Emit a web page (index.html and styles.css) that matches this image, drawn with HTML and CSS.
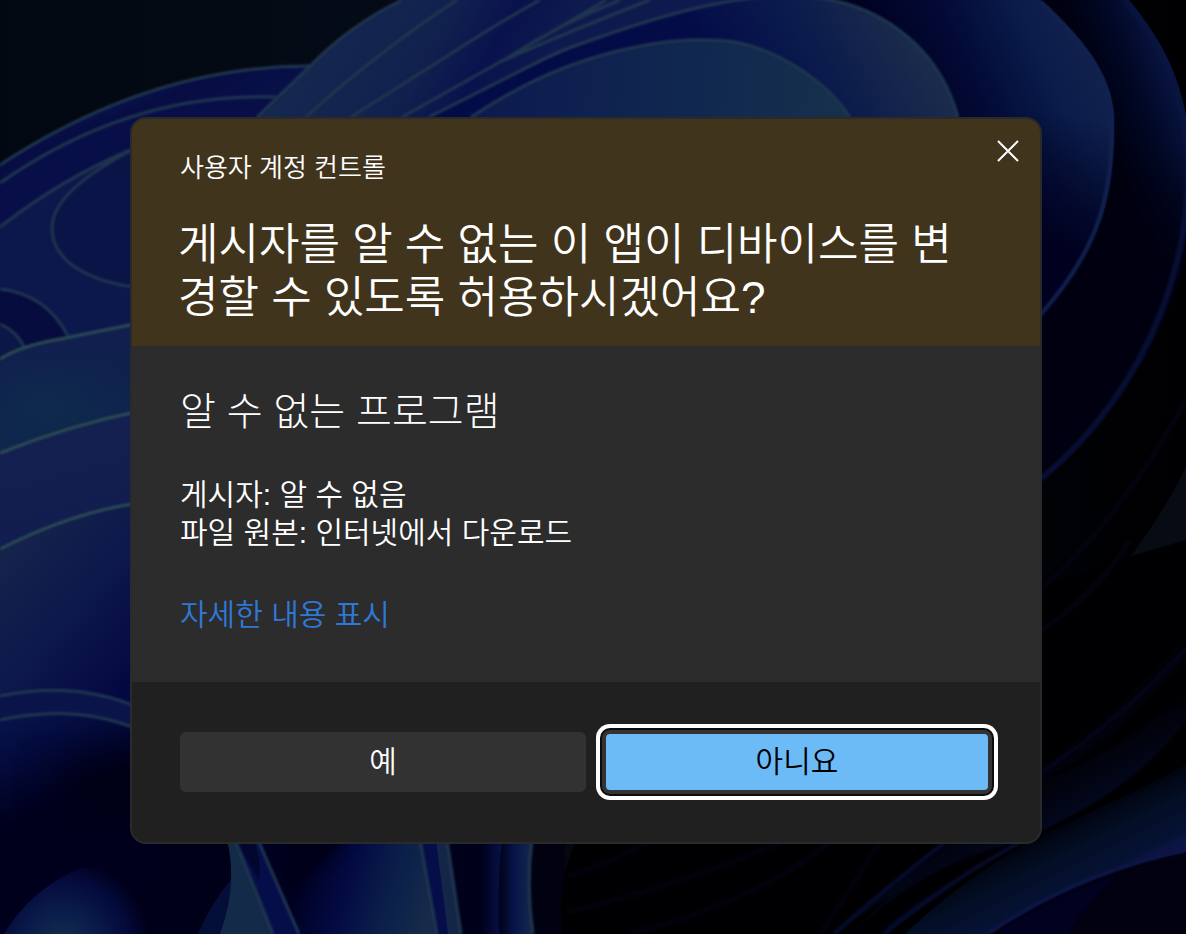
FILE: index.html
```html
<!DOCTYPE html>
<html lang="ko">
<head>
<meta charset="utf-8">
<meta name="viewport" content="width=device-width, initial-scale=1">
<title>사용자 계정 컨트롤</title>
<link rel="stylesheet" href="styles.css">
</head>
<body>
<svg class="wallpaper" viewBox="0 0 1186 934" preserveAspectRatio="xMidYMid slice" aria-hidden="true">
  <defs>
    <filter id="soft" color-interpolation-filters="sRGB" x="-60%" y="-60%" width="220%" height="220%"><feGaussianBlur stdDeviation="20"/></filter>
    <filter id="haze" color-interpolation-filters="sRGB" x="-30%" y="-30%" width="160%" height="160%"><feGaussianBlur stdDeviation="6"/></filter>
    <filter id="edge" color-interpolation-filters="sRGB" x="-10%" y="-10%" width="120%" height="120%"><feGaussianBlur stdDeviation="1"/></filter>
    <linearGradient id="sky" x1="0" y1="0" x2="1" y2="0"><stop offset="0" stop-color="#020811"/><stop offset=".3" stop-color="#050b16"/><stop offset="1" stop-color="#000002"/></linearGradient>
    <linearGradient id="leftBack" gradientUnits="userSpaceOnUse" x1="120" y1="80" x2="160" y2="180"><stop offset="0" stop-color="#0b1a55"/><stop offset=".3" stop-color="#070d42"/><stop offset="1" stop-color="#0a1450"/></linearGradient>
    <linearGradient id="top" gradientUnits="userSpaceOnUse" x1="330" y1="0" x2="520" y2="110"><stop offset="0" stop-color="#15284f"/><stop offset=".5" stop-color="#11214e"/><stop offset=".75" stop-color="#0a124d"/><stop offset="1" stop-color="#0e1a4e"/></linearGradient>
    <linearGradient id="mid" gradientUnits="userSpaceOnUse" x1="740" y1="110" x2="900" y2="20"><stop offset="0" stop-color="#040c48"/><stop offset=".5" stop-color="#0a1b4c"/><stop offset="1" stop-color="#1b2b4c"/></linearGradient>
    <linearGradient id="inner" gradientUnits="userSpaceOnUse" x1="480" y1="90" x2="840" y2="120"><stop offset="0" stop-color="#0d1a4f"/><stop offset=".6" stop-color="#10284f"/><stop offset="1" stop-color="#16304c"/></linearGradient>
    <linearGradient id="right" gradientUnits="userSpaceOnUse" x1="930" y1="150" x2="1110" y2="70"><stop offset="0" stop-color="#000222"/><stop offset=".35" stop-color="#030a36"/><stop offset=".7" stop-color="#091c4b"/><stop offset="1" stop-color="#14234e"/></linearGradient>
    <linearGradient id="outer" gradientUnits="userSpaceOnUse" x1="1110" y1="140" x2="1190" y2="110"><stop offset="0" stop-color="#00000f"/><stop offset=".5" stop-color="#010825"/><stop offset="1" stop-color="#0a1644"/></linearGradient>
    <linearGradient id="outerFade" gradientUnits="userSpaceOnUse" x1="0" y1="150" x2="0" y2="300"><stop offset="0" stop-color="#000010" stop-opacity="0"/><stop offset="1" stop-color="#000010"/></linearGradient>
    <linearGradient id="fadeA" gradientUnits="userSpaceOnUse" x1="1100" y1="120" x2="1060" y2="300"><stop offset="0" stop-color="#000018" stop-opacity="0"/><stop offset=".8" stop-color="#00001f"/></linearGradient>
    <linearGradient id="p1" gradientUnits="userSpaceOnUse" x1="0" y1="330" x2="20" y2="450"><stop offset="0" stop-color="#111e4f"/><stop offset="1" stop-color="#0f264d"/></linearGradient>
    <linearGradient id="p2" gradientUnits="userSpaceOnUse" x1="0" y1="430" x2="30" y2="540"><stop offset="0" stop-color="#142150"/><stop offset="1" stop-color="#101d4e"/></linearGradient>
    <linearGradient id="p3" gradientUnits="userSpaceOnUse" x1="10" y1="540" x2="150" y2="660"><stop offset="0" stop-color="#15234c"/><stop offset=".5" stop-color="#0d184b"/><stop offset="1" stop-color="#040842"/></linearGradient>
    <linearGradient id="p4" gradientUnits="userSpaceOnUse" x1="30" y1="705" x2="70" y2="800"><stop offset="0" stop-color="#08144b"/><stop offset=".4" stop-color="#040b3d"/><stop offset="1" stop-color="#00001c"/></linearGradient>
    <radialGradient id="blob" gradientUnits="userSpaceOnUse" cx="62" cy="945" r="88"><stop offset="0" stop-color="#14304c"/><stop offset=".4" stop-color="#0a1c4b"/><stop offset=".75" stop-color="#040a3c"/><stop offset="1" stop-color="#00001a"/></radialGradient>
    <linearGradient id="teal" gradientUnits="userSpaceOnUse" x1="1060" y1="815" x2="1095" y2="885"><stop offset="0" stop-color="#000006"/><stop offset=".5" stop-color="#030f26"/><stop offset=".9" stop-color="#061234"/><stop offset="1" stop-color="#0d1545"/></linearGradient>
    <linearGradient id="band" gradientUnits="userSpaceOnUse" x1="1080" y1="745" x2="1110" y2="800"><stop offset="0" stop-color="#000003"/><stop offset="1" stop-color="#03081f"/></linearGradient>
    <linearGradient id="stem" gradientUnits="userSpaceOnUse" x1="300" y1="870" x2="430" y2="910"><stop offset="0" stop-color="#000020"/><stop offset=".35" stop-color="#030a42"/><stop offset=".7" stop-color="#0b204a"/><stop offset="1" stop-color="#162a49"/></linearGradient>
    <linearGradient id="s2" gradientUnits="userSpaceOnUse" x1="460" y1="0" x2="502" y2="0"><stop offset="0" stop-color="#01011c"/><stop offset=".5" stop-color="#000018"/><stop offset="1" stop-color="#08114a"/></linearGradient>
    <linearGradient id="s3" gradientUnits="userSpaceOnUse" x1="502" y1="0" x2="532" y2="0"><stop offset="0" stop-color="#01051f"/><stop offset=".4" stop-color="#07144a"/><stop offset="1" stop-color="#14284c"/></linearGradient>
  </defs>
  <rect width="1186" height="934" fill="url(#sky)"/>

  <path fill="url(#leftBack)" d="M0 165Q150 66 310 66L420 66V400H0Z"/>
  <path fill="#080f48" d="M0 183Q130 92 276 97L300 400H0Z"/>
  <path fill="#0c174c" d="M0 227Q60 180 130 150V400H0Z"/>
  <path fill="#0b1447" d="M140 146Q52 190 52 228C52 262 90 282 140 288Z"/>
  <path fill="#070c3e" d="M0 289Q46 294 68 336L0 360Z"/>
  <path fill="#0b1746" d="M0 324Q18 332 25 349L0 360Z"/>
  <g class="rims" filter="url(#edge)">
    <path d="M0 165Q150 66 310 66"/><path d="M0 183Q130 92 276 97"/><path d="M0 227Q60 180 130 150"/>
    <path d="M140 146Q52 190 52 228C52 262 90 282 140 288"/><path d="M0 289Q46 294 68 336"/><path d="M0 324Q18 332 25 349"/>
  </g>

  <path fill="url(#outer)" d="M1000 0H1129C1170 50 1186 90 1192 160C1196 300 1120 440 1000 510Z"/>
  <path fill="url(#outerFade)" d="M1000 120H1200V160C1196 300 1120 440 1000 510Z"/>
  <path fill="none" stroke="#0a1540" stroke-width="6" filter="url(#edge)" opacity=".7" d="M1125 0C1166 50 1182 90 1188 160C1192 300 1116 436 1000 508"/>
  <path fill="url(#right)" d="M780 0H1041C1090 45 1114 80 1114 123C1114 220 1090 270 1000 360H780Z"/>
  <path fill="url(#fadeA)" d="M1030 110H1114C1114 220 1090 270 1000 360Z"/>
  <path fill="none" stroke="#122150" stroke-width="4" filter="url(#edge)" d="M1041 2C1089 47 1112 82 1112 123C1112 220 1088 270 1000 358"/>

  <path fill="url(#top)" d="M257 117L310 66Q350 25 402 0H830C890 20 935 55 958 117V150H240Z"/>
  <path fill="url(#mid)" d="M429 117Q520 70 586 42C680 8 740-4 790-4C880-4 940 50 958 117V150H400Z"/>
  <path fill="url(#inner)" d="M471 117Q530 78 586 60C650 40 700 36 740 43C780 52 825 80 850 117V150H450Z"/>
  <g class="rims" filter="url(#edge)">
    <path d="M257 117L310 66Q350 25 402 0"/><path d="M306 117Q380 50 457 0"/><path d="M351 117L452 53Q500 22 540 0"/>
    <path d="M402 117L509 57L606 0"/><path d="M509 57Q560 24 620 0"/><path d="M500 62Q560 35 650 0"/>
    <path d="M429 117L528 67Q560 50 586 42C680 8 740-4 790-4C880-4 940 50 958 117"/>
    <path d="M471 117Q530 78 586 60C650 40 700 36 740 43C780 52 825 80 850 117"/>
  </g>

  <path fill="url(#p1)" d="M0 359Q20 346 60 339L140 323V700H0Z"/>
  <ellipse cx="45" cy="405" rx="50" ry="22" fill="#0e2c4b" filter="url(#soft)"/>
  <path fill="url(#p2)" d="M0 453Q70 425 140 411V700H0Z"/>
  <path fill="url(#p3)" d="M0 549Q75 511 140 503V760H0Z"/>
  <path fill="#0b1449" d="M0 696Q75 680 140 708V760H0Z"/>
  <path fill="url(#p4)" d="M0 720Q75 703 140 730L260 830L300 934H0Z"/>
  <ellipse cx="115" cy="785" rx="60" ry="24" fill="#000014" filter="url(#soft)"/>
  <path fill="url(#blob)" d="M4 934Q30 890 80 868H160V934Z"/>
  <g class="rims green" filter="url(#edge)">
    <path d="M0 359Q20 346 60 339L140 323"/><path d="M0 453Q70 425 140 411"/><path d="M0 549Q75 511 140 503"/>
  </g>
  <g class="rims" filter="url(#edge)">
    <path d="M0 696Q75 680 140 708"/><path d="M0 720Q75 703 140 730"/>
  </g>

  <path fill="#000018" d="M160 840H565V934H160Z"/>
  <path fill="#050d39" d="M232 878Q210 905 198 934H270V878Z"/>
  <path fill="#132b49" d="M227 840Q238 885 220 934H273L235 840Z"/>
  <path fill="#060e49" d="M235 840L273 934H300L258 840Z"/>
  <path fill="#03072f" d="M236 840H253Q262 860 259 880Z"/>
  <path fill="url(#stem)" d="M258 840L300 934H437L420 840Z"/>
  <path fill="#000018" filter="url(#haze)" d="M285 838H350Q325 860 292 890Z"/>
  <path fill="#050e48" d="M420 840L437 934H460L445 840Z"/>
  <path fill="#132647" d="M436 840L448 934H461L447 840Z"/>
  <path fill="url(#s2)" d="M447 840L461 934H499Q497 885 502 840Z"/>
  <path fill="url(#s3)" d="M502 840Q497 885 499 934H533Q526 885 532 840Z"/>
  <path fill="#010111" d="M532 840Q526 885 533 934H565V840Z"/>
  <g class="rims" filter="url(#edge)">
    <path d="M235 840L273 934"/><path d="M258 840L299 934"/><path d="M420 840L437 934"/><path d="M447 840L461 934"/><path d="M532 840Q526 885 533 934"/>
  </g>

  <path fill="#000002" d="M563 934Q555 880 578 838L1030 840V590L1131 557Q1160 546 1186 542V934Z"/>
  <path fill="#060b14" d="M1131 556Q1165 510 1186 467V540Z"/>
  <path fill="none" stroke="#02030d" stroke-width="6" filter="url(#edge)" d="M1040 590Q1120 520 1186 400M1040 632Q1100 590 1130 540"/>
  <path fill="none" stroke="#03061c" stroke-width="6" filter="url(#haze)" d="M1020 790Q1110 735 1186 649"/>
  <path fill="none" stroke="#030619" stroke-width="4" filter="url(#edge)" d="M1020 786Q1110 731 1190 645"/>
  <path fill="url(#band)" filter="url(#edge)" d="M831 934Q900 870 950 840L1043 780Q1120 750 1190 690V716C1145 775 1100 802 1040 832Q990 850 940 895L881 934H850L890 896Z"/>
  <path fill="#000003" filter="url(#edge)" d="M850 934Q930 860 1020 842L950 884Q910 905 880 934Z"/>
  <path fill="none" stroke="#060b2b" stroke-width="4" filter="url(#edge)" d="M834 934Q890 885 945 842M884 934Q950 880 1024 840"/>
  <path fill="url(#teal)" d="M905 934Q960 880 1043 834Q1120 800 1186 765V852Q1080 874 990 934Z"/>
  <path fill="#01010f" d="M990 934Q1080 874 1186 852V934Z"/>
  <path fill="#010120" filter="url(#edge)" d="M1000 930Q1060 892 1120 874Q1085 905 1068 936H1000Z"/>
  <path fill="none" stroke="#0d1544" stroke-width="4" filter="url(#edge)" d="M990 932Q1080 872 1186 850"/>
  <path fill="none" stroke="#02020d" stroke-width="6" filter="url(#edge)" d="M568 876Q620 860 650 840M568 912Q690 882 780 842M820 934Q850 890 880 842M630 934Q760 900 830 842"/>
</svg>

<main class="desktop">
  <section class="dialog" role="dialog" aria-labelledby="question">
    <header class="dialog-header">
      <div class="title-row">
        <p class="caption">사용자 계정 컨트롤</p>
        <button class="close" type="button" aria-label="닫기">
          <svg viewBox="0 0 22 22" aria-hidden="true"><path d="M1 1L21 21M21 1L1 21"/></svg>
        </button>
      </div>
      <h1 class="question" id="question">게시자를 알 수 없는 이 앱이 디바이스를 변경할 수 있도록 허용하시겠어요?</h1>
    </header>
    <div class="dialog-body">
      <h2 class="program">알 수 없는 프로그램</h2>
      <div class="details">
        <p>게시자: 알 수 없음</p>
        <p>파일 원본: 인터넷에서 다운로드</p>
      </div>
      <a class="more" href="#">자세한 내용 표시</a>
    </div>
    <footer class="actions">
      <button class="button" type="button">예</button>
      <button class="button primary" type="button">아니요</button>
    </footer>
  </section>
</main>
</body>
</html>
```
FILE: styles.css
```css
* {
  box-sizing: border-box;
}

body {
  margin: 0;
  min-height: 100vh;
  background: #000;
  color: #fff;
  font-family: "Liberation Sans", "Noto Sans CJK KR", sans-serif;
  font-size: 30px;
  font-weight: 350;
  line-height: 38px;
}

h1, h2, p {
  margin: 0;
  font-weight: inherit;
}

.wallpaper {
  position: fixed;
  inset: 0;
  width: 100%;
  height: 100%;
}

.rims {
  fill: none;
  stroke: #20364f;
  stroke-width: 3;
}

.rims.green {
  stroke: #2b4c53;
}

.desktop {
  position: relative;
  display: flex;
  justify-content: center;
  padding: 117px 14px 64px 0;
}

.dialog {
  width: 100%;
  max-width: 912px;
  overflow: hidden;
  border: 2px solid #2a2a2a;
  border-radius: 16px;
  background: #2c2c2c;
}

.dialog-header {
  padding: 16px 16px 22px 46px;
  background: #41341d;
}

.title-row {
  display: flex;
  justify-content: space-between;
}

.caption {
  padding: 15px 0 0 2px;
  font-size: 26px;
  line-height: 36px;
}

.close {
  display: grid;
  place-items: center;
  width: 32px;
  height: 32px;
  padding: 0;
  border: 0;
  background: none;
}

.close svg {
  width: 22px;
  height: 22px;
  fill: none;
  stroke: #fff;
  stroke-width: 2;
}

.question {
  padding: 32px 48px 0 0;
  font-size: 44px;
  line-height: 53px;
}

.dialog-body {
  padding: 40px 48px 48px;
}

.program {
  font-size: 39px;
  font-weight: 300;
  line-height: 52px;
}

.details {
  padding: 38px 0 44px;
}

.more {
  display: inline-block;
  color: #3078d6;
  text-decoration: none;
}

.actions {
  display: grid;
  grid-template-columns: 406fr 390fr;
  gap: 16px;
  align-items: center;
  padding: 48px;
  background: #202020;
}

.button {
  height: 60px;
  padding: 0;
  border: 0;
  border-radius: 6px;
  background: #323232;
  color: inherit;
  font: inherit;
}

.primary {
  height: 64px;
  border: 4px solid #333;
  border-radius: 8px;
  background: #6cbbf7;
  color: #000;
  box-shadow: 0 0 0 2px #0c0c0c, 0 0 0 6px #fff;
}
```
